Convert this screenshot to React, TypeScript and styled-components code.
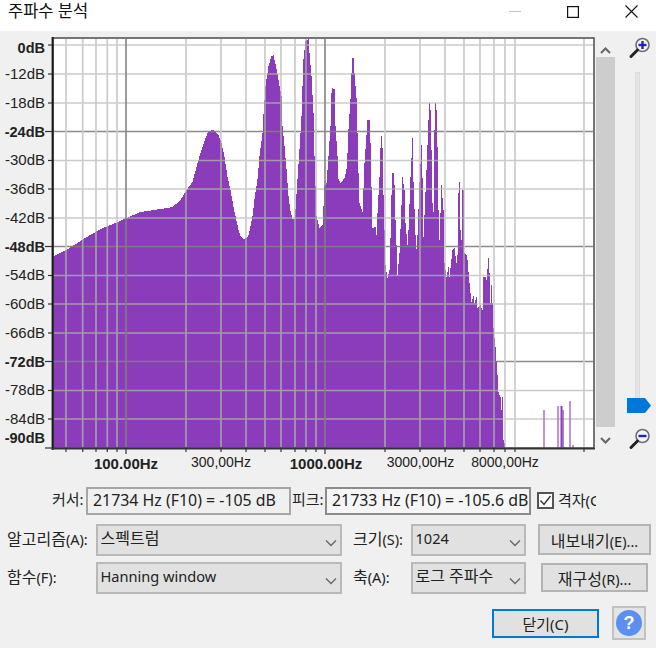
import React from "react";
import styled, { createGlobalStyle } from "styled-components";

const UI_FONT = `"Noto Sans", "Noto Sans CJK KR", "Liberation Sans", sans-serif`;

const Global = createGlobalStyle`
  html, body { margin: 0; padding: 0; background: #f0f0f0; }
  body { width: 656px; height: 648px; overflow: hidden; font-family: ${UI_FONT}; }
`;

const Page = styled.div`
  width: 656px;
  height: 648px;
  display: flex;
  flex-direction: column;
  background: #f0f0f0;
  color: #222;
  overflow: hidden;
`;

const Ko = styled.span`
  font-size: 16px;
`;

const TitleBar = styled.div`
  height: 31px;
  flex: none;
  background: #fff;
  display: flex;
  align-items: flex-start;
  justify-content: space-between;
`;
const Title = styled.div`
  font-size: 16.5px;
  line-height: 22px;
  padding-left: 8px;
  color: #111;
`;
const WindowControls = styled.div`
  display: flex;
  margin-right: -4px;
`;
const WindowButton = styled.div`
  width: 58px;
  height: 23px;
  display: flex;
  align-items: center;
  justify-content: center;
`;

const Main = styled.div`
  height: 443px;
  flex: none;
  display: flex;
`;
const PlotSvg = styled.svg`
  width: 596px;
  height: 443px;
  flex: none;
  display: block;
`;
const Scrollbar = styled.div`
  width: 19px;
  flex: none;
  display: flex;
  flex-direction: column;
  align-items: center;
  padding-top: 13px;
`;
const ScrollArrow = styled.svg`
  width: 13px;
  height: 13px;
  flex: none;
  display: block;
`;
const ScrollThumb = styled.div`
  width: 19px;
  height: 370px;
  background: #cdcdcd;
  margin: 0 0 7px;
`;
const ZoomColumn = styled.div`
  flex: 1;
  display: flex;
  flex-direction: column;
  align-items: center;
  padding: 5px 0 0 4px;
`;
const ZoomIcon = styled.svg<{ $gap?: number }>`
  width: 24px;
  height: 24px;
  flex: none;
  display: block;
  margin: ${(p) => p.$gap ?? 0}px 0 0 5px;
`;
const SliderTrack = styled.div`
  position: relative;
  width: 5px;
  height: 327px;
  margin-top: 12px;
  background: #e4e4e4;
  border: 1px solid #dcdcdc;
  border-bottom: none;
  box-sizing: border-box;
`;
const SliderThumb = styled.svg`
  position: absolute;
  left: -9px;
  bottom: -14px;
  width: 24px;
  height: 15px;
  display: block;
`;

const Readouts = styled.div`
  height: 28px;
  margin-top: 13px;
  flex: none;
  display: flex;
  align-items: stretch;
  padding-left: 52px;
`;
const ReadoutLabel = styled.span<{ $w: number; $pad?: number }>`
  width: ${(p) => p.$w}px;
  box-sizing: border-box;
  padding-left: ${(p) => p.$pad ?? 0}px;
  flex: none;
  font-size: 15px;
  line-height: 24px;
  white-space: nowrap;
`;
const ReadoutBox = styled.div<{ $w: number; $dark?: boolean }>`
  width: ${(p) => p.$w}px;
  flex: none;
  box-sizing: border-box;
  border: 2px solid ${(p) => (p.$dark ? "#8c8c8c" : "#a6a6a6")};
  background: ${(p) => (p.$dark ? "#f6f6f6" : "#f0f0f0")};
  font-size: 15.9px;
  line-height: 23px;
  padding-left: 5px;
  white-space: nowrap;
  overflow: hidden;
`;
const CheckWrap = styled.div`
  display: flex;
  align-items: flex-start;
  margin-left: 6px;
  padding-top: 5px;
`;
const CheckBox = styled.div`
  width: 17px;
  height: 17px;
  box-sizing: border-box;
  border: 2px solid #555;
  background: #fff;
  flex: none;
  display: flex;
  align-items: center;
  justify-content: center;
`;
const CheckLabel = styled.span`
  width: 38px;
  margin-left: 4px;
  margin-top: -4px;
  overflow: hidden;
  white-space: nowrap;
  font-size: 15px;
  line-height: 24px;
`;

const Controls = styled.div`
  margin-top: 9px;
  padding-left: 7px;
  display: grid;
  grid-template-columns: 89px 246px 11px 58px 115px 12px 113px;
  grid-template-rows: 32px 32px;
  row-gap: 6px;
  flex: none;
`;
const FieldLabel = styled.span<{ $col: number }>`
  grid-column: ${(p) => p.$col};
  font-size: 14.5px;
  line-height: 31px;
  white-space: nowrap;
`;
const Select = styled.div<{ $col: number }>`
  grid-column: ${(p) => p.$col};
  box-sizing: border-box;
  border: 2px solid #b9b9b9;
  background: #e1e1e1;
  display: flex;
  justify-content: space-between;
  align-items: flex-start;
  font-size: 14.6px;
  line-height: 25px;
  padding: 0 2px 0 2.5px;
  white-space: nowrap;
`;
const Chevron = styled.svg`
  width: 14px;
  height: 8px;
  margin-top: 13px;
  flex: none;
  display: block;
`;
const SideButton = styled.div<{ $inset?: boolean }>`
  grid-column: 7;
  box-sizing: border-box;
  margin: ${(p) => (p.$inset ? "1px 3px 2px" : "0 0 1px")};
  border: 2px solid #b4b4b4;
  background: #e1e1e1;
  display: flex;
  align-items: center;
  justify-content: center;
  font-size: 14.5px;
  white-space: nowrap;
`;

const Footer = styled.div`
  margin-top: 12px;
  padding-right: 10px;
  display: flex;
  justify-content: flex-end;
  align-items: center;
  gap: 13px;
  flex: none;
`;
const CloseButton = styled.div`
  width: 107px;
  height: 29px;
  box-sizing: border-box;
  border: 2px solid #0078d7;
  background: #e1e1e1;
  display: flex;
  align-items: center;
  justify-content: center;
  font-size: 15px;
`;
const HelpButton = styled.div`
  width: 34px;
  height: 34px;
  box-sizing: border-box;
  border: 2px solid #c2c2c2;
  background: #e4e4e4;
  display: flex;
  align-items: center;
  justify-content: center;
`;
const HelpMark = styled.div`
  width: 26px;
  height: 26px;
  border-radius: 50%;
  background: #5b8ff2;
  color: #fff;
  font-family: "Liberation Sans", sans-serif;
  font-weight: 700;
  font-size: 18px;
  line-height: 26px;
  text-align: center;
`;

const POINTS: [number, number][] = [
  [53,256],[66,250],[83,239],[100,229],[115,223],[126,218],[140,212],[160,209],[172,207],[180,200],[186,190],[192,182],[197,163],[200,153],[205,138],[208,131],[213,130],[218,135],[221,143],[224,157],[227,177],[230,190],[233,207],[238,230],[240,236],[243,239],[246,238],
  [248,235],[250,226],[252,216],[254,199],[257,179],[259,156],[262,133],[263,114],[265,86],[268,66],[271,56],[273,55],[275,64],[277,74],[279,86],[281,96],[282,126],[284,146],[286,169],[288,196],[290,211],[292,219],[294,219],[295,209],[297,179],[299,149],[301,116],[302,86],[303,59],[305,41],[308,39],[309,53],[311,76],[313,113],[314,156],[316,216],[319,228],[322,225],[324,186],[326,183],[328,156],[330,126],[331,93],[332,88],[334,89],[335,126],[337,156],[338,179],[340,183],[344,178],[346,169],[347,153],[348,129],[350,99],[351,73],[352,58],[353,58],[354,73],[356,98],[357,133],[358,173],[359,203],[362,212],[364,163],[366,135],[367,120],[369,120],[370,143],[371,187],[372,228],[375,227],[376,235],[377,213],[379,177],[380,148],[381,136],[382,148],[383,195],[385,265],[387,278],[389,270],[390,238],[391,195],[392,173],[393,173],[394,185],[395,220],[396,245],[397,275],[399,253],[401,205],[402,177],[404,190],[405,223],[407,245],[408,230],[410,177],[412,138],[413,182],[415,235],[416,249],[417,235],[419,182],[421,145],[422,178],[423,237],[426,170],[428,120],[429,103],[430,110],[431,150],[432,203],[433,212],[434,130],[435,103],[436,110],[437,147],[438,210],[439,240],[440,213],[441,185],[443,210],[444,263],[446,277],[448,267],[449,277],[452,250],[454,248],[456,263],[457,255],[458,193],[459,182],[460,230],[461,240],[462,190],[463,190],[464,253],[466,255],[467,260],[469,283],[471,302],[473,296],[474,303],[476,297],[477,308],[480,305],[482,310],[483,277],[485,277],[486,280],[488,258],[489,273],[490,303],[491,285],[492,303],[493,328],[495,347],[497,375],[498,392],[500,397],[501,410],[502,397],[503,440],[504,443],[505,448]
];

const yAt = (x: number) => {
  for (let i = 0; i < POINTS.length - 1; i++) {
    const [x0, y0] = POINTS[i];
    const [x1, y1] = POINTS[i + 1];
    if (x >= x0 && x <= x1) return y0 + ((y1 - y0) * (x - x0)) / (x1 - x0);
  }
  return 448;
};

const buildPath = () => {
  let d = "M53 448";
  for (let x = 53; x < 505; x++) {
    const y = Math.round(yAt(x));
    d += `V${y}H${x + 1}`;
  }
  return d + "V448Z";
};
const SPECTRUM = buildPath();

const H_LINES = [45, 74, 103, 131.5, 160.5, 189, 218, 246.5, 275.5, 304, 333, 361.5, 390.5, 419];
const H_DARK = new Set([131.5, 246.5, 361.5]);
const V_LINES = [66, 82.7, 96, 107.3, 117, 126, 186, 221, 246, 265, 281, 295, 306, 316, 325, 385, 420, 445, 464, 480, 494, 505, 515, 584];
const V_DARK = new Set([126, 325]);

const Y_LABELS: [string, number, boolean][] = [
  ["0dB", 53, true],["-12dB", 79, false],["-18dB", 108, false],["-24dB", 137, true],["-30dB", 165, false],["-36dB", 194, false],["-42dB", 223, false],["-48dB", 252, true],["-54dB", 280, false],["-60dB", 309, false],["-66dB", 338, false],["-72dB", 367, true],["-78dB", 395, false],["-84dB", 424, false],["-90dB", 443, true],
];
const X_LABELS: [string, number, number, boolean][] = [
  ["100.00Hz", 126, 469, true],["300,00Hz", 221, 467, false],["1000.00Hz", 326, 469, true],["3000,00Hz", 420.5, 467, false],["8000,00Hz", 505, 467, false],
];
const SPIKES: [number, number, number, string][] = [
  [544, 410, 1.5, "#a86fd4"],[558, 406, 1.5, "#a86fd4"],[561.5, 406, 2, "#8b3cbb"],[563, 410, 1.5, "#9a55c8"],[570, 401, 1.5, "#a86fd4"],[573, 445, 1.5, "#a86fd4"],
];

const Grid = ({ light, dark }: { light: string; dark: string }) => (
  <g strokeWidth={1.7}>
    {H_LINES.map((y) => (
      <line key={`h${y}`} x1={54} x2={593} y1={y} y2={y} stroke={H_DARK.has(y) ? dark : light} />
    ))}
    {V_LINES.map((x) => (
      <line key={`v${x}`} x1={x} x2={x} y1={39} y2={447} stroke={V_DARK.has(x) ? dark : light} />
    ))}
  </g>
);

const Plot = () => (
  <PlotSvg viewBox="0 31 596 443">
    <defs>
      <clipPath id="spec">
        <path d={SPECTRUM} />
      </clipPath>
    </defs>
    <rect x={53} y={38} width={541} height={410} fill="#fff" />
    <Grid light="#cbcbcb" dark="#8a8a8a" />
    <path d={SPECTRUM} fill="#8b3cbb" shapeRendering="crispEdges" />
    {SPIKES.map(([x, y, w, c]) => (
      <line key={x} x1={x} x2={x} y1={y} y2={448} stroke={c} strokeWidth={w} />
    ))}
    <g clipPath="url(#spec)">
      <Grid light="#a29ca8" dark="#807a84" />
    </g>
    <rect x={53} y={38} width={541} height={410} fill="none" stroke="#555" strokeWidth={1.6} />
    <line x1={52.6} x2={52.6} y1={37} y2={450} stroke="#1a1a1a" strokeWidth={2} />
    <line x1={52} x2={595} y1={448.6} y2={448.6} stroke="#333" strokeWidth={1.8} />
    {H_LINES.map((y) => (
      <line key={y} x1={H_DARK.has(y) ? 45 : 48} x2={52} y1={y} y2={y} stroke="#333" strokeWidth={1.2} />
    ))}
    <line x1={45} x2={52} y1={448} y2={448} stroke="#333" strokeWidth={1.2} />
    {V_LINES.map((x) => (
      <line key={x} x1={x} x2={x} y1={449} y2={V_DARK.has(x) ? 454 : 452} stroke="#333" strokeWidth={1.2} />
    ))}
    <g fontFamily="'Liberation Sans', sans-serif" fill="#222">
      {Y_LABELS.map(([t, y, b]) => (
        <text key={t} x={45} y={y} textAnchor="end" fontSize={b ? 14.5 : 15} fontWeight={b ? 700 : 400}>
          {t}
        </text>
      ))}
      {X_LABELS.map(([t, x, y, b]) => (
        <text key={t} x={x} y={y} textAnchor="middle" fontSize={b ? 15 : 14} fontWeight={b ? 700 : 400}>
          {t}
        </text>
      ))}
    </g>
  </PlotSvg>
);

const Magnifier = ({ plus, gap }: { plus?: boolean; gap?: number }) => (
  <ZoomIcon viewBox="0 0 24 24" $gap={gap}>
    <circle cx="14.5" cy="9" r="6.5" fill="#f4f4f8" stroke="#6e6e6e" strokeWidth="1.6" />
    <line x1="9.5" y1="14" x2="3" y2="20.5" stroke="#222" strokeWidth="3" strokeLinecap="round" />
    <rect x="10.5" y="7.8" width="8" height="2.4" fill="#2424b4" />
    {plus && <rect x="13.3" y="5" width="2.4" height="8" fill="#2424b4" />}
  </ZoomIcon>
);

const Down = () => (
  <Chevron viewBox="0 0 14 8">
    <path d="M2 1.5 L7 6.5 L12 1.5" fill="none" stroke="#666" strokeWidth="1.3" />
  </Chevron>
);

export default function App() {
  return (
    <Page>
      <Global />
      <TitleBar>
        <Title>주파수 분석</Title>
        <WindowControls>
          <WindowButton>
            <svg width="12" height="12" viewBox="0 0 12 12">
              <line x1="0" x2="12" y1="5.5" y2="5.5" stroke="#c8c8c8" strokeWidth="1.2" />
            </svg>
          </WindowButton>
          <WindowButton>
            <svg width="12" height="12" viewBox="0 0 12 12">
              <rect x="0.6" y="0.6" width="10.8" height="10.8" fill="none" stroke="#111" strokeWidth="1.2" />
            </svg>
          </WindowButton>
          <WindowButton>
            <svg width="13" height="13" viewBox="0 0 13 13">
              <path d="M0.5 0.5 L12.5 12.5 M12.5 0.5 L0.5 12.5" stroke="#111" strokeWidth="1.1" />
            </svg>
          </WindowButton>
        </WindowControls>
      </TitleBar>
      <Main>
        <Plot />
        <Scrollbar>
          <ScrollArrow viewBox="0 0 13 13">
            <path d="M2 9 L6.5 4.5 L11 9" fill="none" stroke="#666" strokeWidth="2" />
          </ScrollArrow>
          <ScrollThumb />
          <ScrollArrow viewBox="0 0 13 13">
            <path d="M2 4 L6.5 8.5 L11 4" fill="none" stroke="#666" strokeWidth="2" />
          </ScrollArrow>
        </Scrollbar>
        <ZoomColumn>
          <Magnifier plus />
          <SliderTrack>
            <SliderThumb viewBox="0 0 24 15">
              <path d="M0 0 H18 L24 7.5 L18 15 H0 Z" fill="#0078d7" />
            </SliderThumb>
          </SliderTrack>
          <Magnifier gap={28} />
        </ZoomColumn>
      </Main>
      <Readouts>
        <ReadoutLabel $w={34}>커서:</ReadoutLabel>
        <ReadoutBox $w={205}>21734 Hz (F10) = -105 dB</ReadoutBox>
        <ReadoutLabel $w={34} $pad={1}>피크:</ReadoutLabel>
        <ReadoutBox $w={206} $dark>21733 Hz (F10) = -105.6 dB</ReadoutBox>
        <CheckWrap>
          <CheckBox>
            <svg width="13" height="13" viewBox="0 0 13 13">
              <path d="M1.5 6.5 L5 10.5 L11.5 2" fill="none" stroke="#333" strokeWidth="1.4" />
            </svg>
          </CheckBox>
          <CheckLabel>격자(G)</CheckLabel>
        </CheckWrap>
      </Readouts>
      <Controls>
        <FieldLabel $col={1}><Ko>알고리즘</Ko>(A):</FieldLabel>
        <Select $col={2}><Ko>스펙트럼</Ko><Down /></Select>
        <FieldLabel $col={4}><Ko>크기</Ko>(S):</FieldLabel>
        <Select $col={5}>1024<Down /></Select>
        <SideButton><span><Ko>내보내기</Ko>(E)...</span></SideButton>
        <FieldLabel $col={1}><Ko>함수</Ko>(F):</FieldLabel>
        <Select $col={2}>Hanning window<Down /></Select>
        <FieldLabel $col={4}><Ko>축</Ko>(A):</FieldLabel>
        <Select $col={5}><Ko>로그 주파수</Ko><Down /></Select>
        <SideButton $inset><span><Ko>재구성</Ko>(R)...</span></SideButton>
      </Controls>
      <Footer>
        <CloseButton>닫기(C)</CloseButton>
        <HelpButton>
          <HelpMark>?</HelpMark>
        </HelpButton>
      </Footer>
    </Page>
  );
}
